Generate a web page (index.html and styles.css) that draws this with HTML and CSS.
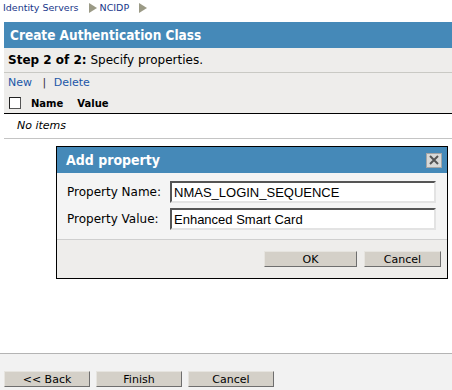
FILE: index.html
```html
<!DOCTYPE html>
<html lang="en">
<head>
    <meta charset="UTF-8">
    <title>Create Authentication Class</title>
    <link rel="stylesheet" href="styles.css">
</head>
<body>
    <div class="crumbs">
        <a href="javascript:;">Identity Servers</a>
        <svg class="arrow" width="8" height="10" viewBox="0 0 8 10"><polygon points="0,0 8,5 0,10" /></svg>
        <a href="javascript:;">NCIDP</a>
        <svg class="arrow" width="8" height="10" viewBox="0 0 8 10"><polygon points="0,0 8,5 0,10" /></svg>
    </div>

    <div class="page">
        <div class="title">Create Authentication Class</div>
        <div class="step"><b>Step 2 of 2:</b> Specify properties.</div>
        <div class="toolbar">
            <a href="javascript:;">New</a>
            <span class="sep">|</span>
            <a href="javascript:;">Delete</a>
        </div>
        <div class="head-row">
            <span class="check"></span>
            <span class="col-name">Name</span>
            <span class="col-value">Value</span>
        </div>
        <div class="empty">No items</div>
    </div>

    <!-- 弹出窗口 -->
    <div class="dialog">
        <div class="dialog-title">
            <span>Add property</span>
            <span class="close">
                <svg width="12" height="10" viewBox="0 0 12 10"><path d="M2 1 L10 9 M10 1 L2 9" /></svg>
            </span>
        </div>
        <div class="dialog-body">
            <label>Property Name:</label>
            <input type="text" value="NMAS_LOGIN_SEQUENCE">
            <label>Property Value:</label>
            <input type="text" value="Enhanced Smart Card">
        </div>
        <div class="dialog-buttons">
            <button class="btn btn-ok">OK</button>
            <button class="btn btn-cancel">Cancel</button>
        </div>
    </div>

    <div class="footer">
        <button class="btn">&lt;&lt; Back</button>
        <button class="btn">Finish</button>
        <button class="btn">Cancel</button>
    </div>
</body>
</html>
```

FILE: styles.css
```css
*{
    margin: 0;
    padding: 0;
    box-sizing: border-box;
}
html, body{
    height: 100%;
}
body{
    font-family: "DejaVu Sans", Verdana, sans-serif;
    font-size: 12px;
    color: #000;
    background-color: #fff;
    display: flex;
    flex-direction: column;
    position: relative;
}
a{
    text-decoration: none;
}
.crumbs{
    height: 22px;
    padding: 2px 0 0 3px;
    display: flex;
    align-items: flex-start;
    font-size: 9.5px;
    line-height: 12px;
}
.crumbs a{
    color: #17368a;
}
.crumbs .arrow{
    fill: #9b9a86;
    margin: 1px 3px 0 10px;
}
.page{
    margin-left: 4px;
}
.title{
    height: 26px;
    line-height: 26px;
    padding-left: 6px;
    background-color: #4589b8;
    color: #fff;
    font-family: "DejaVu Sans Condensed", "DejaVu Sans", sans-serif;
    font-weight: bold;
    font-size: 13.5px;
}
.step{
    height: 25px;
    line-height: 25px;
    padding-left: 4px;
    background-color: #eeedeb;
    border-bottom: 1px solid #c9c9c4;
}
.toolbar{
    height: 20px;
    line-height: 20px;
    padding-left: 4px;
    background-color: #eeedeb;
    font-size: 11px;
}
.toolbar a{
    color: #1c57a8;
}
.toolbar .sep{
    color: #333;
    margin: 0 4px 0 7px;
}
.head-row{
    height: 21px;
    display: flex;
    align-items: center;
    background-color: #eeedeb;
    border-bottom: 1px solid #000;
    font-size: 10px;
    font-weight: bold;
}
.check{
    width: 12px;
    height: 12px;
    margin-left: 5px;
    background-color: #fff;
    border: 1px solid #555;
    border-top-color: #222;
    border-left-color: #222;
}
.col-name{
    margin-left: 10px;
}
.col-value{
    margin-left: 14px;
}
.empty{
    height: 25px;
    line-height: 23px;
    padding-left: 13px;
    font-size: 11px;
    font-style: italic;
    border-bottom: 1px solid #c4c4c4;
}
/* 弹出窗口 */
.dialog{
    position: absolute;
    left: 56px;
    top: 146px;
    width: 392px;
    height: 133px;
    border: 1px solid #000;
    background-color: #eeedeb;
}
.dialog-title{
    height: 26px;
    padding: 0 5px 0 9px;
    display: flex;
    align-items: center;
    justify-content: space-between;
    background-color: #4589b8;
    color: #fff;
    font-family: "DejaVu Sans Condensed", "DejaVu Sans", sans-serif;
    font-weight: bold;
    font-size: 14px;
}
.close{
    width: 16px;
    height: 15px;
    display: flex;
    align-items: center;
    justify-content: center;
    background-color: #d9d9d7;
    border: 1px solid #a5a5a5;
}
.close path{
    stroke: #555;
    stroke-width: 2;
    fill: none;
}
.dialog-body{
    height: 67px;
    padding: 8px 11px 0 10px;
    display: grid;
    grid-template-columns: 103px 1fr;
    grid-auto-rows: 22px;
    row-gap: 5px;
    align-content: start;
    align-items: center;
    background-color: #f4f4f4;
    border-bottom: 1px solid #cfcfcf;
}
.dialog-body input{
    height: 22px;
    padding: 0 2px;
    font-family: "Liberation Sans", Arial, sans-serif;
    font-size: 13px;
    background-color: #fff;
    border: 2px solid #e3e3e3;
    border-top-color: #555;
    border-left-color: #555;
    outline: none;
}
.dialog-buttons{
    display: flex;
    justify-content: flex-end;
    gap: 7px;
    padding: 11px 6px 0 0;
}
.btn{
    height: 16px;
    font-family: "DejaVu Sans", Verdana, sans-serif;
    font-size: 11px;
    line-height: 13px;
    color: #000;
    background-color: #d4d0c8;
    border: 1px solid;
    border-color: #e6e4df #6e6e6e #6e6e6e #e6e4df;
}
.btn-ok{
    width: 93px;
}
.btn-cancel{
    width: 77px;
}
.footer{
    margin-top: auto;
    height: 37px;
    padding: 17px 0 0 4px;
    display: flex;
    gap: 6px;
    background-color: #f2f2f2;
    border-top: 1px solid #b4b4b4;
}
.footer .btn{
    width: 86px;
}
```
